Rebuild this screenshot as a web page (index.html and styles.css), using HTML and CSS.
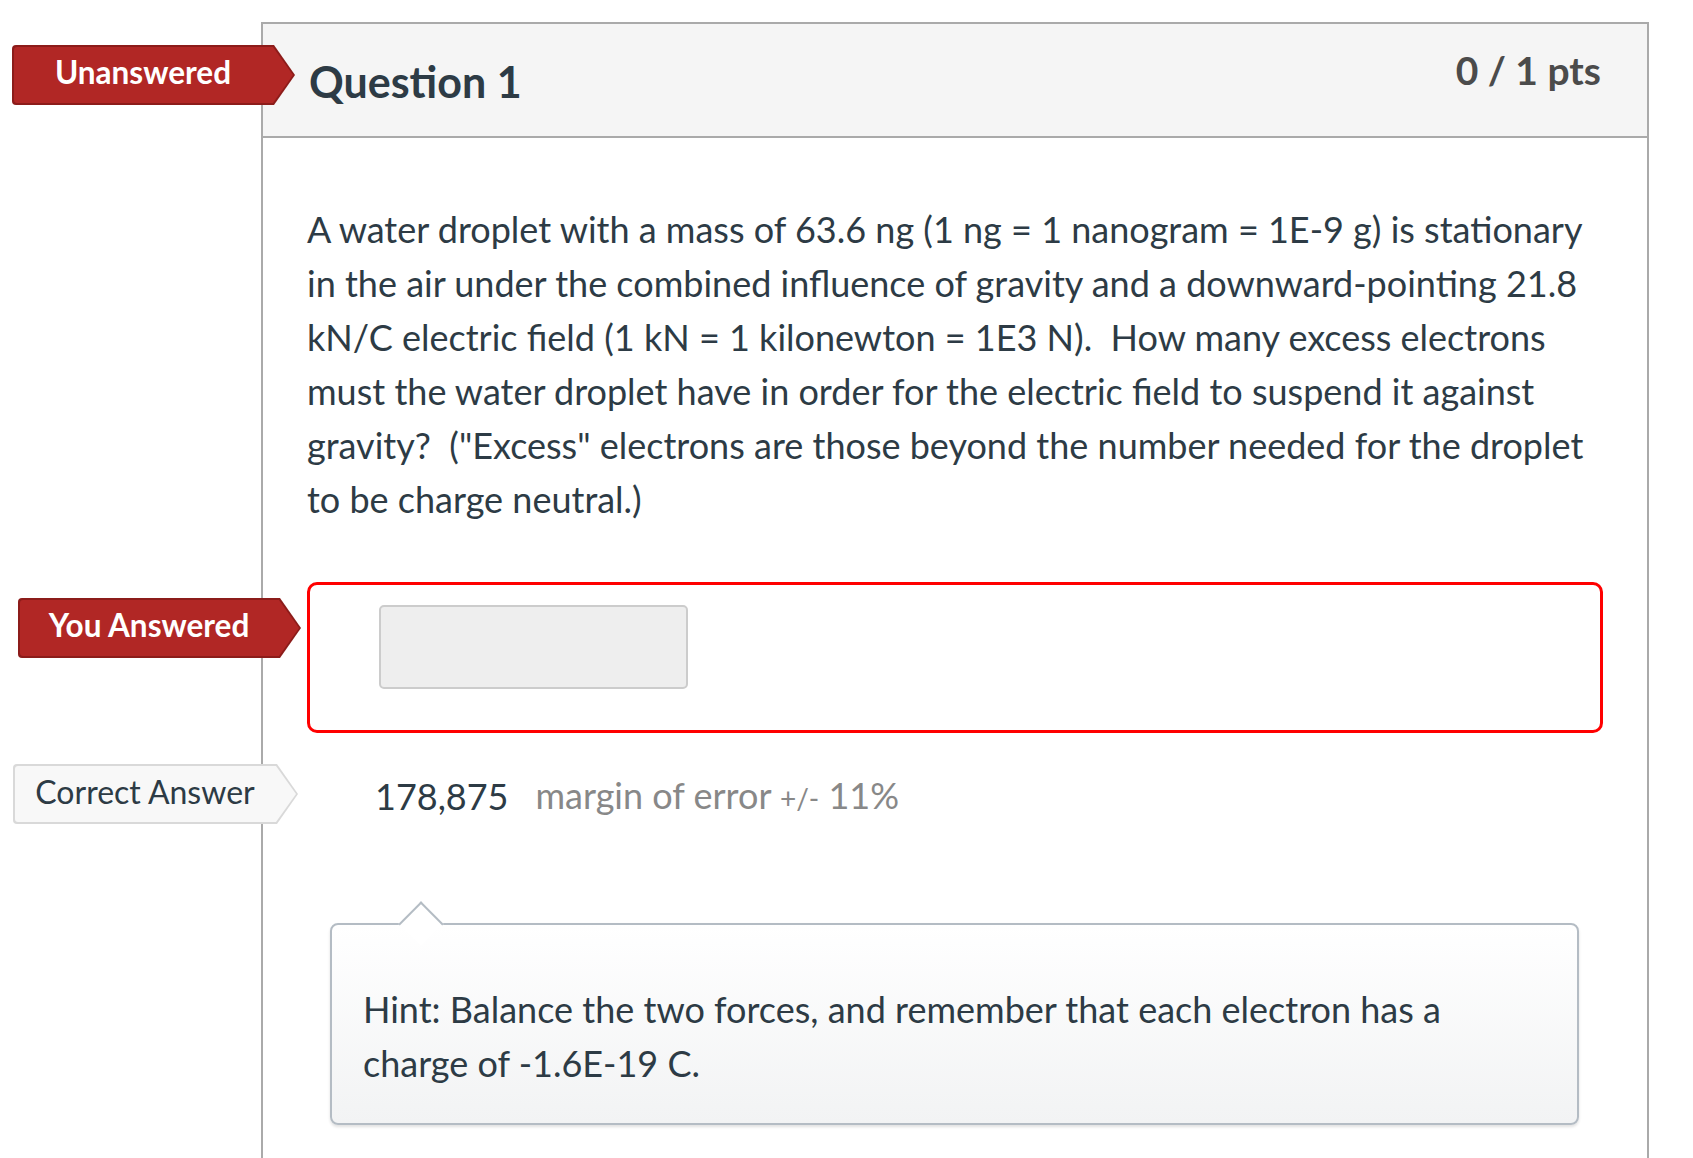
FILE: index.html
```html
<!DOCTYPE html>
<html lang="en">
<head>
<meta charset="utf-8">
<title>Question 1</title>
<link rel="stylesheet" href="styles.css">
</head>
<body>
<div class="page">
  <div class="question">
    <span class="badge badge-danger badge-unanswered">Unanswered</span>
    <div class="question-header">
      <h2 class="question-name">Question 1</h2>
      <span class="question-points">0 / 1 pts</span>
    </div>
    <div class="question-body">
      <p class="question-text">A water droplet with a mass of 63.6 ng (1 ng = 1 nanogram = 1E-9 g) is stationary<br>in the air under the combined influence of gravity and a downward-pointing 21.8<br>kN/C electric field (1 kN = 1 kilonewton = 1E3 N).&nbsp; How many excess electrons<br>must the water droplet have in order for the electric field to suspend it against<br>gravity?&nbsp; ("Excess" electrons are those beyond the number needed for the droplet<br>to be charge neutral.)</p>

      <div class="answer answer-wrong">
        <span class="badge badge-danger badge-you">You Answered</span>
        <div class="answer-input"></div>
      </div>

      <div class="answer answer-correct">
        <span class="badge badge-info">Correct Answer</span>
        <span class="answer-value">178,875</span>
        <span class="answer-margin">margin of error <small class="pm">+/-</small> 11%</span>
      </div>

      <div class="hint">
        <p>Hint: Balance the two forces, and remember that each electron has a<br>charge of -1.6E-19 C.</p>
      </div>
    </div>
  </div>
</div>
</body>
</html>
```

FILE: styles.css
```css
html, body {
  margin: 0;
  padding: 0;
  overflow: hidden;
  background: #ffffff;
}

body {
  font-family: "Lato", "Open Sans", "Liberation Sans", sans-serif;
  color: #2d3b45;
}

.page {
  padding: 22px 44px 0 261px;
}

.question {
  position: relative;
  border: 2px solid #aaaaaa;
  border-bottom: none;
  min-height: 1200px;
}

/* header */
.question-header {
  display: flex;
  justify-content: space-between;
  align-items: flex-start;
  padding: 24px 46px 29px 46px;
  background: #f5f5f5;
  border-bottom: 2px solid #aaaaaa;
}

.question-name {
  margin: 8px 0 0 0;
  font-size: 43px;
  font-weight: 700;
  color: #2d3b45;
  line-height: normal;
}

.question-points {
  font-size: 39px;
  font-weight: 700;
  color: #4b4b4b;
  line-height: normal;
  margin-top: -1px;
}

/* body */
.question-body {
  padding: 64px 44px 40px 44px;
}

.question-text {
  margin: 0;
  font-size: 36px;
  line-height: 54px;
}

/* badges */
.badge {
  position: absolute;
  z-index: 1;
  box-sizing: border-box;
  height: 60px;
  width: 283px;
  display: flex;
  align-items: center;
  justify-content: center;
  padding: 0 21px 6px 0;
  font-size: 31.5px;
  line-height: normal;
  white-space: nowrap;
  border-radius: 4px 0 0 4px;
  clip-path: polygon(0 0, calc(100% - 21px) 0, 100% 50%, calc(100% - 21px) 100%, 0 100%);
}

.badge::before {
  content: "";
  position: absolute;
  z-index: -1;
  inset: 2px;
  border-radius: 3px 0 0 3px;
  clip-path: polygon(0 0, calc(100% - 20px) 0, 100% 50%, calc(100% - 20px) 100%, 0 100%);
}

.badge-danger {
  background: #8c1c1a;
  color: #ffffff;
  font-weight: 700;
}

.badge-danger::before {
  background: #b12725;
}

.badge-info {
  background: #d9d9d9;
  color: #2d3b45;
  font-weight: 400;
  font-size: 32px;
  width: 285px;
}

.badge-info::before {
  background: #f8f8f8;
}

.badge-unanswered {
  top: 21px;
  left: -251px;
}

.badge-you {
  top: 13px;
  left: -292px;
}

.badge-info {
  top: -2px;
  left: -294px;
}

/* answers */
.answer {
  position: relative;
}

.answer-wrong {
  margin-top: 56px;
  border: 3px solid #ff0000;
  border-radius: 10px;
  padding: 20px 0 41px 69px;
}

.answer-input {
  box-sizing: border-box;
  width: 309px;
  height: 84px;
  background: #eeeeee;
  border: 2px solid #cccccc;
  border-radius: 5px;
}

.answer-correct {
  margin-top: 33px;
  height: 60px;
  display: flex;
  align-items: center;
  padding-left: 68px;
  font-size: 36px;
  line-height: 54px;
}

.answer-value {
  color: #2d3b45;
}

.answer-margin {
  margin-left: 27px;
  color: #888888;
}

.answer-margin .pm {
  font-size: 28px;
}

/* hint */
.hint {
  position: relative;
  margin: 97px 24px 0 23px;
  border: 2px solid #b4bcc4;
  border-radius: 8px;
  background: linear-gradient(#ffffff, #f2f3f4);
  padding: 57px 30px 33px 31px;
  box-shadow: 0 2px 3px rgba(0, 0, 0, 0.12);
}

.hint::before {
  content: "";
  position: absolute;
  top: -17px;
  left: 73px;
  width: 30px;
  height: 30px;
  background: #ffffff;
  border-top: 2px solid #b4bcc4;
  border-left: 2px solid #b4bcc4;
  transform: rotate(45deg);
}

.hint p {
  position: relative;
  margin: 0;
  font-size: 36px;
  line-height: 54px;
}
```
